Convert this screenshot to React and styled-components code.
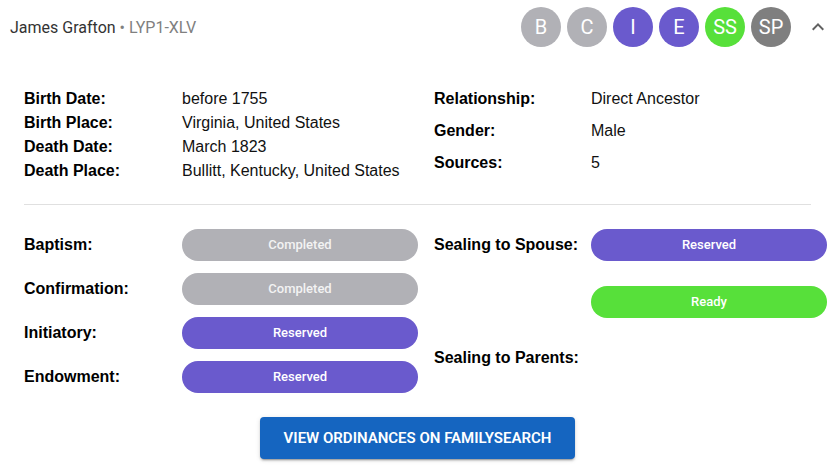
import React from "react";
import styled, { createGlobalStyle } from "styled-components";

const GlobalStyle = createGlobalStyle`
  body {
    margin: 0;
    background: #ffffff;
    font-family: "Liberation Sans", Arial, sans-serif;
  }
  * { box-sizing: border-box; }
`;

const COLORS = {
  completed: "#b1b1b6",
  reserved: "#6a5acd",
  ready: "#57e03a",
  dark: "#7f7f7f",
};

const avatars = [
  { text: "B", color: COLORS.completed },
  { text: "C", color: COLORS.completed },
  { text: "I", color: COLORS.reserved },
  { text: "E", color: COLORS.reserved },
  { text: "SS", color: COLORS.ready },
  { text: "SP", color: COLORS.dark },
];

const vitals = [
  ["Birth Date:", "before 1755"],
  ["Birth Place:", "Virginia, United States"],
  ["Death Date:", "March 1823"],
  ["Death Place:", "Bullitt, Kentucky, United States"],
];

const details = [
  ["Relationship:", "Direct Ancestor"],
  ["Gender:", "Male"],
  ["Sources:", "5"],
];

const ordinances = [
  ["Baptism:", "Completed", "completed"],
  ["Confirmation:", "Completed", "completed"],
  ["Initiatory:", "Reserved", "reserved"],
  ["Endowment:", "Reserved", "reserved"],
];

function App() {
  return (
    <>
      <GlobalStyle />
      <Card>
        <Header>
          <Title>
            James Grafton <Pid>• LYP1-XLV</Pid>
          </Title>
          <Avatars>
            {avatars.map((a) => (
              <Avatar key={a.text} $color={a.color}>
                {a.text}
              </Avatar>
            ))}
          </Avatars>
          <Toggle>
            <svg width="24" height="24" viewBox="0 0 24 24">
              <path d="M12 8l-6 6 1.41 1.41L12 10.83l4.59 4.58L18 14z" fill="#616161" />
            </svg>
          </Toggle>
        </Header>

        <Columns>
          <InfoList>
            {vitals.map(([label, value]) => (
              <InfoRow key={label}>
                <Label>{label}</Label>
                <Value>{value}</Value>
              </InfoRow>
            ))}
          </InfoList>
          <InfoList $gap={8}>
            {details.map(([label, value]) => (
              <InfoRow key={label} $narrow>
                <Label>{label}</Label>
                <Value>{value}</Value>
              </InfoRow>
            ))}
          </InfoList>
        </Columns>

        <Divider />

        <Columns>
          <OrdList>
            {ordinances.map(([label, status, kind]) => (
              <OrdRow key={label}>
                <Label>{label}</Label>
                <Chip $color={COLORS[kind]} $muted={kind === "completed"}>
                  {status}
                </Chip>
              </OrdRow>
            ))}
          </OrdList>
          <OrdList $gap={24}>
            <OrdRow $top $narrow>
              <Label>Sealing to Spouse:</Label>
              <ChipStack>
                <Chip $color={COLORS.reserved}>Reserved</Chip>
                <Chip $color={COLORS.ready}>Ready</Chip>
              </ChipStack>
            </OrdRow>
            <OrdRow $narrow>
              <Label>Sealing to Parents:</Label>
            </OrdRow>
          </OrdList>
        </Columns>

        <Footer>
          <ActionButton>View Ordinances on FamilySearch</ActionButton>
        </Footer>
      </Card>
    </>
  );
}

export default App;

const Card = styled.div`
  width: 835px;
  height: 467px;
  background: #fff;
  overflow: hidden;
`;

const Header = styled.div`
  display: flex;
  align-items: center;
  height: 54px;
  padding: 0 5px 0 10px;
`;

const Title = styled.div`
  flex: 1;
  font-family: Roboto, sans-serif;
  font-size: 16px;
  color: #333;
  padding-top: 1px;
`;

const Pid = styled.span`
  color: #808080;
  font-size: 16px;
`;

const Avatars = styled.div`
  display: flex;
  gap: 6px;
  margin-right: 15px;
`;

const Avatar = styled.div`
  width: 40px;
  height: 40px;
  border-radius: 50%;
  background: ${(p) => p.$color};
  color: #fff;
  font-family: Roboto, sans-serif;
  font-size: 20px;
  display: flex;
  align-items: center;
  justify-content: center;
`;

const Toggle = styled.div`
  width: 24px;
  height: 24px;
  display: flex;
`;

const Columns = styled.div`
  display: grid;
  grid-template-columns: 394px 1fr;
  column-gap: 16px;
  padding: 0 8px 0 24px;
`;

const InfoList = styled.div`
  display: flex;
  flex-direction: column;
  gap: ${(p) => p.$gap || 0}px;
  padding-top: 33px;
`;

const InfoRow = styled.div`
  display: grid;
  grid-template-columns: ${(p) => (p.$narrow ? 157 : 158)}px 1fr;
  line-height: 24px;
  font-size: 16px;
`;

const Label = styled.div`
  font-weight: 700;
  color: #000;
  font-size: 16px;
`;

const Value = styled.div`
  color: #111;
`;

const Divider = styled.hr`
  border: none;
  border-top: 1px solid #e0e0e0;
  margin: 21px 24px 24px 24px;
  width: 787px;
`;

const OrdList = styled.div`
  display: flex;
  flex-direction: column;
  gap: ${(p) => (p.$gap !== undefined ? p.$gap : 12)}px;
`;

const OrdRow = styled.div`
  display: grid;
  grid-template-columns: ${(p) => (p.$narrow ? 157 : 158)}px 236px;
  align-items: ${(p) => (p.$top ? "start" : "center")};
  min-height: 32px;
  line-height: 32px;
`;

const ChipStack = styled.div`
  display: flex;
  flex-direction: column;
  gap: 25px;
`;

const Chip = styled.div`
  height: 32px;
  border-radius: 16px;
  background: ${(p) => p.$color};
  color: ${(p) => (p.$muted ? "#f3f3f3" : "#fff")};
  font-family: Roboto, sans-serif;
  font-size: 13px;
  font-weight: 500;
  display: flex;
  align-items: center;
  justify-content: center;
`;

const Footer = styled.div`
  display: flex;
  justify-content: center;
  padding-top: 24px;
`;

const ActionButton = styled.button`
  width: 315px;
  height: 42px;
  border: none;
  border-radius: 4px;
  background: #1565c0;
  color: #fff;
  font-family: Roboto, sans-serif;
  font-size: 15px;
  font-weight: 600;
  text-transform: uppercase;
  box-shadow: 0 3px 1px -2px rgba(0, 0, 0, 0.2), 0 2px 2px 0 rgba(0, 0, 0, 0.14),
    0 1px 5px 0 rgba(0, 0, 0, 0.12);
  cursor: pointer;
`;
